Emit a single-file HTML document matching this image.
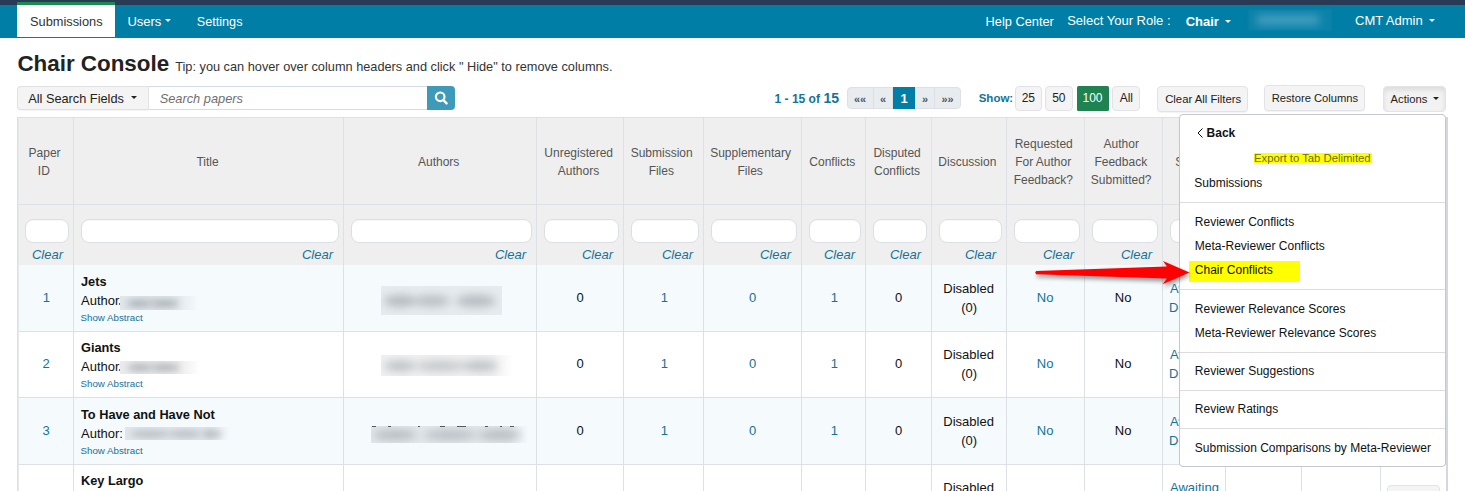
<!DOCTYPE html><html><head><meta charset="utf-8"><style>html,body{margin:0;padding:0;width:1465px;height:491px;overflow:hidden;background:#fff;position:relative;font-family:'Liberation Sans', sans-serif}</style></head><body>
<div style="position:absolute;left:0px;top:0px;width:1465px;height:5px;background:#293a55"></div>
<div style="position:absolute;left:0px;top:5px;width:1465px;height:33px;background:#017ea6"></div>
<div style="position:absolute;left:17px;top:2px;width:98px;height:35px;background:#fff"></div>
<div style="position:absolute;left:17px;top:2px;width:98px;height:3px;background:#1f8a50"></div>
<div style="position:absolute;left:30.00px;top:14.00px;line-height:0;white-space:pre;font:normal normal 12.8px 'Liberation Sans', sans-serif;color:#333;">Submissions</div>
<div style="position:absolute;left:127.40px;top:14.00px;line-height:0;white-space:pre;font:normal normal 13px 'Liberation Sans', sans-serif;color:#fff;">Users</div>
<div style="position:absolute;left:165px;top:19px;width:0;height:0;border-left:3.0px solid transparent;border-right:3.0px solid transparent;border-top:3px solid #fff"></div>
<div style="position:absolute;left:196.80px;top:15.00px;line-height:0;white-space:pre;font:normal normal 12.65px 'Liberation Sans', sans-serif;color:#fff;">Settings</div>
<div style="position:absolute;left:985.60px;top:14.00px;line-height:0;white-space:pre;font:normal normal 12.8px 'Liberation Sans', sans-serif;color:#fff;">Help Center</div>
<div style="position:absolute;left:1067.20px;top:13.00px;line-height:0;white-space:pre;font:normal normal 13px 'Liberation Sans', sans-serif;color:#fff;">Select Your Role :</div>
<div style="position:absolute;left:1185.70px;top:14.00px;line-height:0;white-space:pre;font:normal bold 13px 'Liberation Sans', sans-serif;color:#fff;">Chair</div>
<div style="position:absolute;left:1225px;top:19.5px;width:0;height:0;border-left:3.0px solid transparent;border-right:3.0px solid transparent;border-top:3px solid #fff"></div>
<div style="position:absolute;left:1249px;top:10px;width:82px;height:20px;background:#0c82a9;overflow:hidden;box-shadow:0 0 3px 1px rgba(12,130,169,.8)"><div style="position:absolute;left:8px;right:12px;top:5px;bottom:5px;background:#45a0c0;filter:blur(4px)"></div></div>
<div style="position:absolute;left:1355.00px;top:13.00px;line-height:0;white-space:pre;font:normal normal 13px 'Liberation Sans', sans-serif;color:#fff;">CMT Admin</div>
<div style="position:absolute;left:1429px;top:19px;width:0;height:0;border-left:3.0px solid transparent;border-right:3.0px solid transparent;border-top:3px solid #fff"></div>
<div style="position:absolute;left:17.40px;top:51.00px;line-height:0;white-space:pre;font:normal bold 22.4px 'Liberation Sans', sans-serif;color:#222;">Chair Console</div>
<div style="position:absolute;left:175.20px;top:59.00px;line-height:0;white-space:pre;font:normal normal 12.75px 'Liberation Sans', sans-serif;color:#333;">Tip: you can hover over column headers and click &quot; Hide&quot; to remove columns.</div>
<div style="position:absolute;left:17px;top:86px;width:131px;height:24px;box-sizing:border-box;background:#f4f4f4;border:1px solid #dfe1e4;border-right:none;border-radius:4px 0 0 4px;box-shadow:0 1px 0 rgba(0,0,0,.04)"></div>
<div style="position:absolute;left:28.20px;top:91.00px;line-height:0;white-space:pre;font:normal normal 12.75px 'Liberation Sans', sans-serif;color:#222;">All Search Fields</div>
<div style="position:absolute;left:131px;top:96px;width:0;height:0;border-left:3.0px solid transparent;border-right:3.0px solid transparent;border-top:3px solid #222"></div>
<div style="position:absolute;left:148px;top:86px;width:278px;height:22px;background:#fff;border:1px solid #d5dbe2;border-left:1px solid #e3e3e3"></div>
<div style="position:absolute;left:159.70px;top:91.00px;line-height:0;white-space:pre;font:italic normal 12.8px 'Liberation Sans', sans-serif;color:#6f6f6f;">Search papers</div>
<div style="position:absolute;left:427px;top:86px;width:28px;height:24px;background:#3d9bb9;border-radius:0 4px 4px 0"></div>
<svg style="position:absolute;left:427px;top:86px" width="28" height="24" viewBox="0 0 28 24"><circle cx="13.2" cy="10.8" r="4.3" fill="none" stroke="#fff" stroke-width="2.2"/><line x1="16.3" y1="14" x2="19.6" y2="17.4" stroke="#fff" stroke-width="2.4" stroke-linecap="round"/></svg>
<div style="position:absolute;left:774.60px;top:92.00px;line-height:0;white-space:pre;font:normal bold 12px 'Liberation Sans', sans-serif;color:#13739a;">1 - 15 of</div>
<div style="position:absolute;left:823.40px;top:90.00px;line-height:0;white-space:pre;font:normal bold 14px 'Liberation Sans', sans-serif;color:#13739a;">15</div>
<div style="position:absolute;left:847px;top:87px;width:114px;height:22px;background:#e9ecef;border:1px solid #dde1e5;border-radius:4px;box-sizing:border-box"></div>
<div style="position:absolute;left:873px;top:87px;width:1px;height:22px;background:#dde1e5"></div>
<div style="position:absolute;left:892px;top:87px;width:1px;height:22px;background:#dde1e5"></div>
<div style="position:absolute;left:915px;top:87px;width:1px;height:22px;background:#dde1e5"></div>
<div style="position:absolute;left:934px;top:87px;width:1px;height:22px;background:#dde1e5"></div>
<div style="position:absolute;left:893px;top:87px;width:22px;height:22px;background:#017ea6"></div>
<div style="position:absolute;left:900.50px;top:90.50px;line-height:0;white-space:pre;font:normal bold 13px 'Liberation Sans', sans-serif;color:#fff;">1</div>
<div style="position:absolute;left:853.94px;top:92.50px;line-height:0;white-space:pre;font:normal bold 11px 'Liberation Sans', sans-serif;color:#555;">««</div>
<div style="position:absolute;left:880.00px;top:92.50px;line-height:0;white-space:pre;font:normal bold 11px 'Liberation Sans', sans-serif;color:#555;">«</div>
<div style="position:absolute;left:922.00px;top:92.50px;line-height:0;white-space:pre;font:normal bold 11px 'Liberation Sans', sans-serif;color:#555;">»</div>
<div style="position:absolute;left:941.44px;top:92.50px;line-height:0;white-space:pre;font:normal bold 11px 'Liberation Sans', sans-serif;color:#555;">»»</div>
<div style="position:absolute;left:978.70px;top:92.00px;line-height:0;white-space:pre;font:normal bold 11.5px 'Liberation Sans', sans-serif;color:#13739a;">Show:</div>
<div style="position:absolute;left:1015px;top:85.5px;width:27px;height:25px;background:#f4f4f4;border:1px solid #e1e3e6;border-radius:4px;box-sizing:border-box;"></div>
<div style="position:absolute;left:1021.66px;top:91.00px;line-height:0;white-space:pre;font:normal normal 12px 'Liberation Sans', sans-serif;color:#222;">25</div>
<div style="position:absolute;left:1045px;top:85.5px;width:28px;height:25px;background:#f4f4f4;border:1px solid #e1e3e6;border-radius:4px;box-sizing:border-box;"></div>
<div style="position:absolute;left:1052.16px;top:91.00px;line-height:0;white-space:pre;font:normal normal 12px 'Liberation Sans', sans-serif;color:#222;">50</div>
<div style="position:absolute;left:1077px;top:86px;width:31.5px;height:24.5px;background:#1e8350;border-radius:1.5px"></div>
<div style="position:absolute;left:1082.53px;top:91.00px;line-height:0;white-space:pre;font:normal normal 12px 'Liberation Sans', sans-serif;color:#fff;">100</div>
<div style="position:absolute;left:1112px;top:85.5px;width:28px;height:25px;background:#f4f4f4;border:1px solid #e1e3e6;border-radius:4px;box-sizing:border-box;"></div>
<div style="position:absolute;left:1119.67px;top:91.00px;line-height:0;white-space:pre;font:normal normal 12px 'Liberation Sans', sans-serif;color:#222;">All</div>
<div style="position:absolute;left:1157px;top:86px;width:90.5px;height:26px;background:#f4f4f4;border:1px solid #e1e3e6;border-radius:4px;box-sizing:border-box;box-shadow:0 1px 1px rgba(0,0,0,.05)"></div>
<div style="position:absolute;left:1165.20px;top:93.00px;line-height:0;white-space:pre;font:normal normal 11.3px 'Liberation Sans', sans-serif;color:#222;">Clear All Filters</div>
<div style="position:absolute;left:1264px;top:85px;width:101px;height:26px;background:#f4f4f4;border:1px solid #e1e3e6;border-radius:4px;box-sizing:border-box;box-shadow:0 1px 1px rgba(0,0,0,.05)"></div>
<div style="position:absolute;left:1271.70px;top:92.00px;line-height:0;white-space:pre;font:normal normal 11.2px 'Liberation Sans', sans-serif;color:#222;">Restore Columns</div>
<div style="position:absolute;left:1383px;top:86px;width:63px;height:26px;background:#f2f2f2;border:1px solid #e4e4e4;border-radius:4px;box-sizing:border-box;box-shadow:inset 0 3px 5px rgba(0,0,0,.09)"></div>
<div style="position:absolute;left:1390.60px;top:93.00px;line-height:0;white-space:pre;font:normal normal 11.2px 'Liberation Sans', sans-serif;color:#222;">Actions</div>
<div style="position:absolute;left:1433px;top:97px;width:0;height:0;border-left:3.0px solid transparent;border-right:3.0px solid transparent;border-top:3px solid #222"></div>
<div style="position:absolute;left:17px;top:117px;width:1430px;height:148px;background:#efefef"></div>
<div style="position:absolute;left:17px;top:265px;width:1430px;height:66px;background:#f5fafd"></div>
<div style="position:absolute;left:17px;top:397px;width:1430px;height:67px;background:#f5fafd"></div>
<div style="position:absolute;left:17px;top:117px;width:1430px;height:1px;background:#dde1e5"></div>
<div style="position:absolute;left:17px;top:204px;width:1430px;height:1px;background:#dde1e5"></div>
<div style="position:absolute;left:17px;top:331px;width:1430px;height:1px;background:#dde1e5"></div>
<div style="position:absolute;left:17px;top:397px;width:1430px;height:1px;background:#dde1e5"></div>
<div style="position:absolute;left:17px;top:464px;width:1430px;height:1px;background:#dde1e5"></div>
<div style="position:absolute;left:17px;top:117px;width:1px;height:374px;background:#dde1e5"></div>
<div style="position:absolute;left:73px;top:117px;width:1px;height:374px;background:#dde1e5"></div>
<div style="position:absolute;left:343px;top:117px;width:1px;height:374px;background:#dde1e5"></div>
<div style="position:absolute;left:536px;top:117px;width:1px;height:374px;background:#dde1e5"></div>
<div style="position:absolute;left:623px;top:117px;width:1px;height:374px;background:#dde1e5"></div>
<div style="position:absolute;left:703px;top:117px;width:1px;height:374px;background:#dde1e5"></div>
<div style="position:absolute;left:801px;top:117px;width:1px;height:374px;background:#dde1e5"></div>
<div style="position:absolute;left:865px;top:117px;width:1px;height:374px;background:#dde1e5"></div>
<div style="position:absolute;left:931px;top:117px;width:1px;height:374px;background:#dde1e5"></div>
<div style="position:absolute;left:1006px;top:117px;width:1px;height:374px;background:#dde1e5"></div>
<div style="position:absolute;left:1084px;top:117px;width:1px;height:374px;background:#dde1e5"></div>
<div style="position:absolute;left:1162px;top:117px;width:1px;height:374px;background:#dde1e5"></div>
<div style="position:absolute;left:1225px;top:117px;width:1px;height:374px;background:#dde1e5"></div>
<div style="position:absolute;left:1301px;top:117px;width:1px;height:374px;background:#dde1e5"></div>
<div style="position:absolute;left:1380px;top:117px;width:1px;height:374px;background:#dde1e5"></div>
<div style="position:absolute;left:1446px;top:117px;width:1px;height:374px;background:#dde1e5"></div>
<div style="position:absolute;left:1446px;top:117px;width:2px;height:374px;background:#d3d8de"></div>
<div style="position:absolute;left:18px;top:118px;width:1px;height:373px;background:#e6e9ec"></div>
<div style="position:absolute;left:28.60px;top:146.00px;line-height:0;white-space:pre;font:normal normal 12px 'Liberation Sans', sans-serif;color:#555;">Paper</div>
<div style="position:absolute;left:37.83px;top:164.00px;line-height:0;white-space:pre;font:normal normal 12px 'Liberation Sans', sans-serif;color:#555;">ID</div>
<div style="position:absolute;left:196.40px;top:155.00px;line-height:0;white-space:pre;font:normal normal 12px 'Liberation Sans', sans-serif;color:#555;">Title</div>
<div style="position:absolute;left:418.00px;top:155.00px;line-height:0;white-space:pre;font:normal normal 12px 'Liberation Sans', sans-serif;color:#555;">Authors</div>
<div style="position:absolute;left:544.30px;top:146.00px;line-height:0;white-space:pre;font:normal normal 12px 'Liberation Sans', sans-serif;color:#555;">Unregistered</div>
<div style="position:absolute;left:557.82px;top:164.00px;line-height:0;white-space:pre;font:normal normal 12px 'Liberation Sans', sans-serif;color:#555;">Authors</div>
<div style="position:absolute;left:630.70px;top:146.00px;line-height:0;white-space:pre;font:normal normal 12px 'Liberation Sans', sans-serif;color:#555;">Submission</div>
<div style="position:absolute;left:648.63px;top:164.00px;line-height:0;white-space:pre;font:normal normal 12px 'Liberation Sans', sans-serif;color:#555;">Files</div>
<div style="position:absolute;left:710.20px;top:146.00px;line-height:0;white-space:pre;font:normal normal 12px 'Liberation Sans', sans-serif;color:#555;">Supplementary</div>
<div style="position:absolute;left:737.53px;top:164.00px;line-height:0;white-space:pre;font:normal normal 12px 'Liberation Sans', sans-serif;color:#555;">Files</div>
<div style="position:absolute;left:809.30px;top:155.00px;line-height:0;white-space:pre;font:normal normal 12px 'Liberation Sans', sans-serif;color:#555;">Conflicts</div>
<div style="position:absolute;left:873.40px;top:146.00px;line-height:0;white-space:pre;font:normal normal 12px 'Liberation Sans', sans-serif;color:#555;">Disputed</div>
<div style="position:absolute;left:874.00px;top:164.00px;line-height:0;white-space:pre;font:normal normal 12px 'Liberation Sans', sans-serif;color:#555;">Conflicts</div>
<div style="position:absolute;left:938.30px;top:155.00px;line-height:0;white-space:pre;font:normal normal 12px 'Liberation Sans', sans-serif;color:#555;">Discussion</div>
<div style="position:absolute;left:1014.70px;top:137.00px;line-height:0;white-space:pre;font:normal normal 12px 'Liberation Sans', sans-serif;color:#555;">Requested</div>
<div style="position:absolute;left:1015.15px;top:155.00px;line-height:0;white-space:pre;font:normal normal 12px 'Liberation Sans', sans-serif;color:#555;">For Author</div>
<div style="position:absolute;left:1013.65px;top:173.00px;line-height:0;white-space:pre;font:normal normal 12px 'Liberation Sans', sans-serif;color:#555;">Feedback?</div>
<div style="position:absolute;left:1103.62px;top:137.00px;line-height:0;white-space:pre;font:normal normal 12px 'Liberation Sans', sans-serif;color:#555;">Author</div>
<div style="position:absolute;left:1094.45px;top:155.00px;line-height:0;white-space:pre;font:normal normal 12px 'Liberation Sans', sans-serif;color:#555;">Feedback</div>
<div style="position:absolute;left:1090.79px;top:173.00px;line-height:0;white-space:pre;font:normal normal 12px 'Liberation Sans', sans-serif;color:#555;">Submitted?</div>
<div style="position:absolute;left:1175.30px;top:155.00px;line-height:0;white-space:pre;font:normal normal 12px 'Liberation Sans', sans-serif;color:#555;">S</div>
<div style="position:absolute;left:25px;top:219px;width:43.5px;height:24px;background:#fff;border:1px solid #dcdfe3;border-radius:8px;box-sizing:border-box;box-shadow:inset 0 1px 1px rgba(0,0,0,.03)"></div>
<div style="position:absolute;left:31.96px;top:247.00px;line-height:0;white-space:pre;font:italic normal 13px 'Liberation Sans', sans-serif;color:#13739a;">Clear</div>
<div style="position:absolute;left:81px;top:219px;width:257.5px;height:24px;background:#fff;border:1px solid #dcdfe3;border-radius:8px;box-sizing:border-box;box-shadow:inset 0 1px 1px rgba(0,0,0,.03)"></div>
<div style="position:absolute;left:301.96px;top:247.00px;line-height:0;white-space:pre;font:italic normal 13px 'Liberation Sans', sans-serif;color:#13739a;">Clear</div>
<div style="position:absolute;left:351px;top:219px;width:180.5px;height:24px;background:#fff;border:1px solid #dcdfe3;border-radius:8px;box-sizing:border-box;box-shadow:inset 0 1px 1px rgba(0,0,0,.03)"></div>
<div style="position:absolute;left:494.96px;top:247.00px;line-height:0;white-space:pre;font:italic normal 13px 'Liberation Sans', sans-serif;color:#13739a;">Clear</div>
<div style="position:absolute;left:544px;top:219px;width:74.5px;height:24px;background:#fff;border:1px solid #dcdfe3;border-radius:8px;box-sizing:border-box;box-shadow:inset 0 1px 1px rgba(0,0,0,.03)"></div>
<div style="position:absolute;left:581.96px;top:247.00px;line-height:0;white-space:pre;font:italic normal 13px 'Liberation Sans', sans-serif;color:#13739a;">Clear</div>
<div style="position:absolute;left:631px;top:219px;width:67.5px;height:24px;background:#fff;border:1px solid #dcdfe3;border-radius:8px;box-sizing:border-box;box-shadow:inset 0 1px 1px rgba(0,0,0,.03)"></div>
<div style="position:absolute;left:661.96px;top:247.00px;line-height:0;white-space:pre;font:italic normal 13px 'Liberation Sans', sans-serif;color:#13739a;">Clear</div>
<div style="position:absolute;left:711px;top:219px;width:85.5px;height:24px;background:#fff;border:1px solid #dcdfe3;border-radius:8px;box-sizing:border-box;box-shadow:inset 0 1px 1px rgba(0,0,0,.03)"></div>
<div style="position:absolute;left:759.96px;top:247.00px;line-height:0;white-space:pre;font:italic normal 13px 'Liberation Sans', sans-serif;color:#13739a;">Clear</div>
<div style="position:absolute;left:809px;top:219px;width:51.5px;height:24px;background:#fff;border:1px solid #dcdfe3;border-radius:8px;box-sizing:border-box;box-shadow:inset 0 1px 1px rgba(0,0,0,.03)"></div>
<div style="position:absolute;left:823.96px;top:247.00px;line-height:0;white-space:pre;font:italic normal 13px 'Liberation Sans', sans-serif;color:#13739a;">Clear</div>
<div style="position:absolute;left:873px;top:219px;width:53.5px;height:24px;background:#fff;border:1px solid #dcdfe3;border-radius:8px;box-sizing:border-box;box-shadow:inset 0 1px 1px rgba(0,0,0,.03)"></div>
<div style="position:absolute;left:889.96px;top:247.00px;line-height:0;white-space:pre;font:italic normal 13px 'Liberation Sans', sans-serif;color:#13739a;">Clear</div>
<div style="position:absolute;left:939px;top:219px;width:62.5px;height:24px;background:#fff;border:1px solid #dcdfe3;border-radius:8px;box-sizing:border-box;box-shadow:inset 0 1px 1px rgba(0,0,0,.03)"></div>
<div style="position:absolute;left:964.96px;top:247.00px;line-height:0;white-space:pre;font:italic normal 13px 'Liberation Sans', sans-serif;color:#13739a;">Clear</div>
<div style="position:absolute;left:1014px;top:219px;width:65.5px;height:24px;background:#fff;border:1px solid #dcdfe3;border-radius:8px;box-sizing:border-box;box-shadow:inset 0 1px 1px rgba(0,0,0,.03)"></div>
<div style="position:absolute;left:1042.96px;top:247.00px;line-height:0;white-space:pre;font:italic normal 13px 'Liberation Sans', sans-serif;color:#13739a;">Clear</div>
<div style="position:absolute;left:1092px;top:219px;width:65.5px;height:24px;background:#fff;border:1px solid #dcdfe3;border-radius:8px;box-sizing:border-box;box-shadow:inset 0 1px 1px rgba(0,0,0,.03)"></div>
<div style="position:absolute;left:1120.96px;top:247.00px;line-height:0;white-space:pre;font:italic normal 13px 'Liberation Sans', sans-serif;color:#13739a;">Clear</div>
<div style="position:absolute;left:1170px;top:219px;width:50.5px;height:24px;background:#fff;border:1px solid #dcdfe3;border-radius:8px;box-sizing:border-box;box-shadow:inset 0 1px 1px rgba(0,0,0,.03)"></div>
<div style="position:absolute;left:1183.96px;top:247.00px;line-height:0;white-space:pre;font:italic normal 13px 'Liberation Sans', sans-serif;color:#13739a;">Clear</div>
<div style="position:absolute;left:1233px;top:219px;width:63.5px;height:24px;background:#fff;border:1px solid #dcdfe3;border-radius:8px;box-sizing:border-box;box-shadow:inset 0 1px 1px rgba(0,0,0,.03)"></div>
<div style="position:absolute;left:1259.96px;top:247.00px;line-height:0;white-space:pre;font:italic normal 13px 'Liberation Sans', sans-serif;color:#13739a;">Clear</div>
<div style="position:absolute;left:1309px;top:219px;width:66.5px;height:24px;background:#fff;border:1px solid #dcdfe3;border-radius:8px;box-sizing:border-box;box-shadow:inset 0 1px 1px rgba(0,0,0,.03)"></div>
<div style="position:absolute;left:1338.96px;top:247.00px;line-height:0;white-space:pre;font:italic normal 13px 'Liberation Sans', sans-serif;color:#13739a;">Clear</div>
<div style="position:absolute;left:1388px;top:219px;width:53.5px;height:24px;background:#fff;border:1px solid #dcdfe3;border-radius:8px;box-sizing:border-box;box-shadow:inset 0 1px 1px rgba(0,0,0,.03)"></div>
<div style="position:absolute;left:1404.96px;top:247.00px;line-height:0;white-space:pre;font:italic normal 13px 'Liberation Sans', sans-serif;color:#13739a;">Clear</div>
<div style="position:absolute;left:42.80px;top:290.00px;line-height:0;white-space:pre;font:normal normal 13px 'Liberation Sans', sans-serif;color:#13739a;">1</div>
<div style="position:absolute;left:81.00px;top:274.00px;line-height:0;white-space:pre;font:normal bold 12.75px 'Liberation Sans', sans-serif;color:#111;">Jets</div>
<div style="position:absolute;left:81.00px;top:293.00px;line-height:0;white-space:pre;font:normal normal 13px 'Liberation Sans', sans-serif;color:#111;">Author</div>
<div style="position:absolute;left:119px;top:303px;width:1.2px;height:1.6px;background:rgba(0,0,0,.6)"></div>
<div style="position:absolute;left:80.50px;top:312.00px;line-height:0;white-space:pre;font:normal normal 9.75px 'Liberation Sans', sans-serif;color:#13739a;">Show Abstract</div>
<div style="position:absolute;left:576.50px;top:290.00px;line-height:0;white-space:pre;font:normal normal 13px 'Liberation Sans', sans-serif;color:#111;">0</div>
<div style="position:absolute;left:660.80px;top:290.00px;line-height:0;white-space:pre;font:normal normal 13px 'Liberation Sans', sans-serif;color:#13739a;">1</div>
<div style="position:absolute;left:749.00px;top:290.00px;line-height:0;white-space:pre;font:normal normal 13px 'Liberation Sans', sans-serif;color:#13739a;">0</div>
<div style="position:absolute;left:830.80px;top:290.00px;line-height:0;white-space:pre;font:normal normal 13px 'Liberation Sans', sans-serif;color:#13739a;">1</div>
<div style="position:absolute;left:895.00px;top:290.00px;line-height:0;white-space:pre;font:normal normal 13px 'Liberation Sans', sans-serif;color:#111;">0</div>
<div style="position:absolute;left:943.32px;top:281.00px;line-height:0;white-space:pre;font:normal normal 13px 'Liberation Sans', sans-serif;color:#111;">Disabled</div>
<div style="position:absolute;left:961.22px;top:300.00px;line-height:0;white-space:pre;font:normal normal 13px 'Liberation Sans', sans-serif;color:#111;">(0)</div>
<div style="position:absolute;left:1036.81px;top:290.00px;line-height:0;white-space:pre;font:normal normal 13px 'Liberation Sans', sans-serif;color:#13739a;">No</div>
<div style="position:absolute;left:1114.81px;top:290.00px;line-height:0;white-space:pre;font:normal normal 13px 'Liberation Sans', sans-serif;color:#111;">No</div>
<div style="position:absolute;left:1170.00px;top:281.00px;line-height:0;white-space:pre;font:normal normal 13px 'Liberation Sans', sans-serif;color:#13739a;">Awaiting</div>
<div style="position:absolute;left:1169.00px;top:300.00px;line-height:0;white-space:pre;font:normal normal 13px 'Liberation Sans', sans-serif;color:#13739a;">Decision</div>
<div style="position:absolute;left:42.50px;top:356.00px;line-height:0;white-space:pre;font:normal normal 13px 'Liberation Sans', sans-serif;color:#13739a;">2</div>
<div style="position:absolute;left:81.00px;top:340.00px;line-height:0;white-space:pre;font:normal bold 12.75px 'Liberation Sans', sans-serif;color:#111;">Giants</div>
<div style="position:absolute;left:81.00px;top:359.00px;line-height:0;white-space:pre;font:normal normal 13px 'Liberation Sans', sans-serif;color:#111;">Author</div>
<div style="position:absolute;left:119px;top:369px;width:1.2px;height:1.6px;background:rgba(0,0,0,.6)"></div>
<div style="position:absolute;left:80.50px;top:378.00px;line-height:0;white-space:pre;font:normal normal 9.75px 'Liberation Sans', sans-serif;color:#13739a;">Show Abstract</div>
<div style="position:absolute;left:576.50px;top:356.00px;line-height:0;white-space:pre;font:normal normal 13px 'Liberation Sans', sans-serif;color:#111;">0</div>
<div style="position:absolute;left:660.80px;top:356.00px;line-height:0;white-space:pre;font:normal normal 13px 'Liberation Sans', sans-serif;color:#13739a;">1</div>
<div style="position:absolute;left:749.00px;top:356.00px;line-height:0;white-space:pre;font:normal normal 13px 'Liberation Sans', sans-serif;color:#13739a;">0</div>
<div style="position:absolute;left:830.80px;top:356.00px;line-height:0;white-space:pre;font:normal normal 13px 'Liberation Sans', sans-serif;color:#13739a;">1</div>
<div style="position:absolute;left:895.00px;top:356.00px;line-height:0;white-space:pre;font:normal normal 13px 'Liberation Sans', sans-serif;color:#111;">0</div>
<div style="position:absolute;left:943.32px;top:347.00px;line-height:0;white-space:pre;font:normal normal 13px 'Liberation Sans', sans-serif;color:#111;">Disabled</div>
<div style="position:absolute;left:961.22px;top:366.00px;line-height:0;white-space:pre;font:normal normal 13px 'Liberation Sans', sans-serif;color:#111;">(0)</div>
<div style="position:absolute;left:1036.81px;top:356.00px;line-height:0;white-space:pre;font:normal normal 13px 'Liberation Sans', sans-serif;color:#13739a;">No</div>
<div style="position:absolute;left:1114.81px;top:356.00px;line-height:0;white-space:pre;font:normal normal 13px 'Liberation Sans', sans-serif;color:#111;">No</div>
<div style="position:absolute;left:1170.00px;top:347.00px;line-height:0;white-space:pre;font:normal normal 13px 'Liberation Sans', sans-serif;color:#13739a;">Awaiting</div>
<div style="position:absolute;left:1169.00px;top:366.00px;line-height:0;white-space:pre;font:normal normal 13px 'Liberation Sans', sans-serif;color:#13739a;">Decision</div>
<div style="position:absolute;left:42.50px;top:423.00px;line-height:0;white-space:pre;font:normal normal 13px 'Liberation Sans', sans-serif;color:#13739a;">3</div>
<div style="position:absolute;left:81.00px;top:407.00px;line-height:0;white-space:pre;font:normal bold 12.75px 'Liberation Sans', sans-serif;color:#111;">To Have and Have Not</div>
<div style="position:absolute;left:81.00px;top:426.00px;line-height:0;white-space:pre;font:normal normal 13px 'Liberation Sans', sans-serif;color:#111;">Author:</div>
<div style="position:absolute;left:80.50px;top:445.00px;line-height:0;white-space:pre;font:normal normal 9.75px 'Liberation Sans', sans-serif;color:#13739a;">Show Abstract</div>
<div style="position:absolute;left:576.50px;top:423.00px;line-height:0;white-space:pre;font:normal normal 13px 'Liberation Sans', sans-serif;color:#111;">0</div>
<div style="position:absolute;left:660.80px;top:423.00px;line-height:0;white-space:pre;font:normal normal 13px 'Liberation Sans', sans-serif;color:#13739a;">1</div>
<div style="position:absolute;left:749.00px;top:423.00px;line-height:0;white-space:pre;font:normal normal 13px 'Liberation Sans', sans-serif;color:#13739a;">0</div>
<div style="position:absolute;left:830.80px;top:423.00px;line-height:0;white-space:pre;font:normal normal 13px 'Liberation Sans', sans-serif;color:#13739a;">1</div>
<div style="position:absolute;left:895.00px;top:423.00px;line-height:0;white-space:pre;font:normal normal 13px 'Liberation Sans', sans-serif;color:#111;">0</div>
<div style="position:absolute;left:943.32px;top:414.00px;line-height:0;white-space:pre;font:normal normal 13px 'Liberation Sans', sans-serif;color:#111;">Disabled</div>
<div style="position:absolute;left:961.22px;top:433.00px;line-height:0;white-space:pre;font:normal normal 13px 'Liberation Sans', sans-serif;color:#111;">(0)</div>
<div style="position:absolute;left:1036.81px;top:423.00px;line-height:0;white-space:pre;font:normal normal 13px 'Liberation Sans', sans-serif;color:#13739a;">No</div>
<div style="position:absolute;left:1114.81px;top:423.00px;line-height:0;white-space:pre;font:normal normal 13px 'Liberation Sans', sans-serif;color:#111;">No</div>
<div style="position:absolute;left:1170.00px;top:414.00px;line-height:0;white-space:pre;font:normal normal 13px 'Liberation Sans', sans-serif;color:#13739a;">Awaiting</div>
<div style="position:absolute;left:1169.00px;top:433.00px;line-height:0;white-space:pre;font:normal normal 13px 'Liberation Sans', sans-serif;color:#13739a;">Decision</div>
<div style="position:absolute;left:81.00px;top:473.00px;line-height:0;white-space:pre;font:normal bold 12.75px 'Liberation Sans', sans-serif;color:#111;">Key Largo</div>
<div style="position:absolute;left:943.32px;top:480.00px;line-height:0;white-space:pre;font:normal normal 13px 'Liberation Sans', sans-serif;color:#111;">Disabled</div>
<div style="position:absolute;left:1170.00px;top:480.00px;line-height:0;white-space:pre;font:normal normal 13px 'Liberation Sans', sans-serif;color:#13739a;">Awaiting</div>
<div style="position:absolute;left:1387px;top:485px;width:53px;height:20px;background:#f4f4f4;border:1px solid #e1e3e6;border-radius:4px;box-sizing:border-box;"></div>
<div style="position:absolute;left:120px;top:296px;width:78px;height:14px;background:linear-gradient(90deg,rgba(60,70,80,0.11) 0%,rgba(60,70,80,0.11) 72%,rgba(60,70,80,0) 100%);overflow:hidden"><div style="position:absolute;left:6px;top:2.5px;width:52px;height:9.0px;border-radius:50%;background:rgba(40,50,60,0.16);filter:blur(3px)"></div><div style="position:absolute;left:7px;top:3.5px;width:20px;height:7.0px;border-radius:50%;background:rgba(40,50,60,0.12);filter:blur(3px)"></div><div style="position:absolute;left:35px;top:3.5px;width:24px;height:7.0px;border-radius:50%;background:rgba(40,50,60,0.12);filter:blur(3px)"></div></div>
<div style="position:absolute;left:120px;top:361px;width:80px;height:13px;background:linear-gradient(90deg,rgba(60,70,80,0.11) 0%,rgba(60,70,80,0.11) 72%,rgba(60,70,80,0) 100%);overflow:hidden"><div style="position:absolute;left:7px;top:2.0px;width:52px;height:9.0px;border-radius:50%;background:rgba(40,50,60,0.16);filter:blur(3px)"></div><div style="position:absolute;left:7.5px;top:3.0px;width:20px;height:7.0px;border-radius:50%;background:rgba(40,50,60,0.12);filter:blur(3px)"></div><div style="position:absolute;left:36px;top:3.0px;width:24px;height:7.0px;border-radius:50%;background:rgba(40,50,60,0.12);filter:blur(3px)"></div></div>
<div style="position:absolute;left:125px;top:427px;width:106px;height:13px;background:linear-gradient(90deg,rgba(60,70,80,0.11) 0%,rgba(60,70,80,0.11) 80%,rgba(60,70,80,0) 100%);overflow:hidden"><div style="position:absolute;left:5px;top:2.5px;width:40px;height:8px;border-radius:50%;background:rgba(40,50,60,0.192);filter:blur(3px)"></div><div style="position:absolute;left:44px;top:2.5px;width:32px;height:8px;border-radius:50%;background:rgba(40,50,60,0.192);filter:blur(3px)"></div><div style="position:absolute;left:77px;top:2.5px;width:20px;height:8px;border-radius:50%;background:rgba(40,50,60,0.224);filter:blur(3px)"></div></div>
<div style="position:absolute;left:381px;top:286px;width:121px;height:29px;background:rgba(60,70,80,0.08);overflow:hidden"><div style="position:absolute;left:3px;top:9px;width:32px;height:12px;border-radius:50%;background:rgba(40,50,60,0.256);filter:blur(4px)"></div><div style="position:absolute;left:33px;top:9px;width:36px;height:12px;border-radius:50%;background:rgba(40,50,60,0.224);filter:blur(4px)"></div><div style="position:absolute;left:75px;top:9px;width:40px;height:12px;border-radius:50%;background:rgba(40,50,60,0.256);filter:blur(4px)"></div></div>
<div style="position:absolute;left:381px;top:355px;width:132px;height:21px;background:linear-gradient(90deg,rgba(60,70,80,0.08) 0%,rgba(60,70,80,0.08) 85%,rgba(60,70,80,0) 100%);overflow:hidden"><div style="position:absolute;left:3px;top:5.5px;width:32px;height:10px;border-radius:50%;background:rgba(40,50,60,0.256);filter:blur(4px)"></div><div style="position:absolute;left:35px;top:5.5px;width:48px;height:10px;border-radius:50%;background:rgba(40,50,60,0.224);filter:blur(4px)"></div><div style="position:absolute;left:81px;top:5.5px;width:36px;height:10px;border-radius:50%;background:rgba(40,50,60,0.256);filter:blur(4px)"></div></div>
<div style="position:absolute;left:370.5px;top:426px;width:157px;height:17px;background:linear-gradient(90deg,rgba(60,70,80,0.1) 0%,rgba(60,70,80,0.1) 88%,rgba(60,70,80,0) 100%);overflow:hidden"><div style="position:absolute;left:2.5px;top:3.5px;width:44px;height:10px;border-radius:50%;background:rgba(40,50,60,0.24);filter:blur(4px)"></div><div style="position:absolute;left:53.5px;top:3.5px;width:52px;height:10px;border-radius:50%;background:rgba(40,50,60,0.224);filter:blur(4px)"></div><div style="position:absolute;left:107.5px;top:3.5px;width:44px;height:10px;border-radius:50%;background:rgba(40,50,60,0.24);filter:blur(4px)"></div></div>
<div style="position:absolute;left:372px;top:425.5px;width:4px;height:1.5px;background:rgba(30,30,30,.7)"></div>
<div style="position:absolute;left:388px;top:425.5px;width:3px;height:1.5px;background:rgba(30,30,30,.7)"></div>
<div style="position:absolute;left:418px;top:425.5px;width:2px;height:1.5px;background:rgba(30,30,30,.7)"></div>
<div style="position:absolute;left:440px;top:425.5px;width:5px;height:1.5px;background:rgba(30,30,30,.7)"></div>
<div style="position:absolute;left:457px;top:425.5px;width:9px;height:1.5px;background:rgba(30,30,30,.7)"></div>
<div style="position:absolute;left:485px;top:425.5px;width:3px;height:1.5px;background:rgba(30,30,30,.7)"></div>
<div style="position:absolute;left:500px;top:425.5px;width:2px;height:1.5px;background:rgba(30,30,30,.7)"></div>
<div style="position:absolute;left:510px;top:425.5px;width:4px;height:1.5px;background:rgba(30,30,30,.7)"></div>
<div style="position:absolute;left:1179px;top:114px;width:267px;height:352.5px;box-sizing:border-box;background:#fff;border:1px solid #c4c7cb;border-radius:4px"></div>
<svg style="position:absolute;left:1196px;top:127px" width="9" height="12" viewBox="0 0 9 12"><polyline points="6.5,1.5 2,6 6.5,10.5" fill="none" stroke="#111" stroke-width="1"/></svg>
<div style="position:absolute;left:1206.60px;top:126.00px;line-height:0;white-space:pre;font:normal bold 12px 'Liberation Sans', sans-serif;color:#111;">Back</div>
<div style="position:absolute;left:1254px;top:152.5px;width:118px;height:10px;background:#ffff00"></div>
<div style="position:absolute;left:1254.00px;top:152.00px;line-height:0;white-space:pre;font:normal normal 11.3px 'Liberation Sans', sans-serif;color:#6e6e1e;">Export to Tab Delimited</div>
<div style="position:absolute;left:1194.30px;top:176.00px;line-height:0;white-space:pre;font:normal normal 12px 'Liberation Sans', sans-serif;color:#111;">Submissions</div>
<div style="position:absolute;left:1180px;top:202px;width:265px;height:1px;background:#dcdcdc"></div>
<div style="position:absolute;left:1180px;top:289px;width:265px;height:1px;background:#dcdcdc"></div>
<div style="position:absolute;left:1180px;top:352px;width:265px;height:1px;background:#dcdcdc"></div>
<div style="position:absolute;left:1180px;top:390px;width:265px;height:1px;background:#dcdcdc"></div>
<div style="position:absolute;left:1180px;top:428px;width:265px;height:1px;background:#dcdcdc"></div>
<div style="position:absolute;left:1194.80px;top:215.00px;line-height:0;white-space:pre;font:normal normal 12px 'Liberation Sans', sans-serif;color:#111;">Reviewer Conflicts</div>
<div style="position:absolute;left:1194.80px;top:239.00px;line-height:0;white-space:pre;font:normal normal 12px 'Liberation Sans', sans-serif;color:#111;">Meta-Reviewer Conflicts</div>
<div style="position:absolute;left:1189px;top:261px;width:111px;height:20.5px;background:#ffff00"></div>
<div style="position:absolute;left:1194.80px;top:263.00px;line-height:0;white-space:pre;font:normal normal 12px 'Liberation Sans', sans-serif;color:#111;">Chair Conflicts</div>
<div style="position:absolute;left:1194.80px;top:302.00px;line-height:0;white-space:pre;font:normal normal 12px 'Liberation Sans', sans-serif;color:#111;">Reviewer Relevance Scores</div>
<div style="position:absolute;left:1194.80px;top:326.00px;line-height:0;white-space:pre;font:normal normal 12px 'Liberation Sans', sans-serif;color:#111;">Meta-Reviewer Relevance Scores</div>
<div style="position:absolute;left:1194.80px;top:364.00px;line-height:0;white-space:pre;font:normal normal 12px 'Liberation Sans', sans-serif;color:#111;">Reviewer Suggestions</div>
<div style="position:absolute;left:1194.80px;top:402.00px;line-height:0;white-space:pre;font:normal normal 12px 'Liberation Sans', sans-serif;color:#111;">Review Ratings</div>
<div style="position:absolute;left:1194.80px;top:441.00px;line-height:0;white-space:pre;font:normal normal 12px 'Liberation Sans', sans-serif;color:#111;">Submission Comparisons by Meta-Reviewer</div>
<svg style="position:absolute;left:0;top:0;overflow:visible" width="1465" height="491"><defs><filter id="sh" x="-10%" y="-80%" width="120%" height="260%"><feGaussianBlur stdDeviation="2.2"/></filter></defs><polygon points="1036,270.9 1167,266.5 1163,261 1189.5,272.4 1162.5,284.3 1167,278.4 1036,274.2" fill="rgba(0,0,0,.40)" filter="url(#sh)" transform="translate(1,3)"/><polygon points="1036,270.9 1167,266.5 1163,261 1189.5,272.4 1162.5,284.3 1167,278.4 1036,274.2" fill="#ff0000"/><circle cx="1037" cy="272.55" r="1.65" fill="#ff0000"/></svg>
</body></html>
